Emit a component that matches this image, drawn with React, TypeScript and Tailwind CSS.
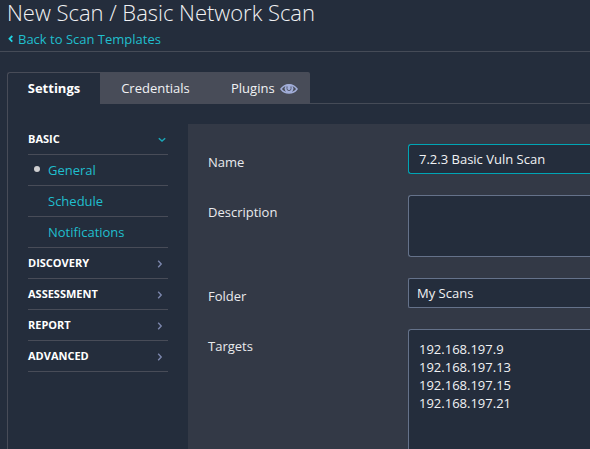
import React from 'react';

const sections = ['DISCOVERY', 'ASSESSMENT', 'REPORT', 'ADVANCED'];
const pages = ['General', 'Schedule', 'Notifications'];
const targets = ['192.168.197.9', '192.168.197.13', '192.168.197.15', '192.168.197.21'];

function Eye() {
  return (
    <svg width="18" height="12" viewBox="0 0 18 12" fill="none" className="ml-[5px] shrink-0">
      <path d="M1 6C4.8.2 13.2.2 17 6 13.2 11.4 4.8 11.4 1 6Z" stroke="#a2aed9" strokeWidth="1.5" />
      <circle cx="9" cy="5.6" r="4.4" fill="#a2aed9" />
      <path d="M7 3.4v2.2a2 2 0 0 0 4 0V3.4" stroke="#555b70" strokeWidth="1" />
    </svg>
  );
}

function Field({ label, gap, pad, children }: { label: string; gap: string; pad: string; children: React.ReactNode }) {
  return (
    <div className={`flex items-start ${gap}`}>
      <div className={`w-[200px] shrink-0 leading-[18px] text-[#e9eaed] ${pad}`}>{label}</div>
      {children}
    </div>
  );
}

export default function App() {
  return (
    <div className="flex h-[449px] w-[590px] flex-col overflow-hidden bg-[#242d3c] font-['Open_Sans',sans-serif] text-[13px] text-[#f1f2f4]">
      <header className="h-[52px] shrink-0 border-b border-[#454b57] pl-[7px]">
        <h1 className="h-[30px] whitespace-nowrap text-[22px] font-light leading-[25px] tracking-[-0.02px]">New Scan / Basic Network Scan</h1>
        <a className="flex items-center leading-[18px] text-[#20bfce]">
          <svg width="6" height="8" viewBox="0 0 6 8" fill="none" className="ml-px mr-1">
            <path d="M4.3 1 1.5 3.8l2.8 2.8" stroke="#22d3e2" strokeWidth="1.8" />
          </svg>
          Back to Scan Templates
        </a>
      </header>

      <main className="ml-[7px] mt-[20px] flex min-h-0 flex-1 flex-col">
        <nav className="flex h-8 shrink-0">
          <div className="flex w-[93px] items-center justify-center rounded-tl-[3px] border-l border-t border-[#484c58] font-bold text-white">Settings</div>
          <div className="flex w-[111px] items-center justify-center bg-[#484c58] pt-px">Credentials</div>
          <div className="flex w-[99px] items-center rounded-tr-[2px] bg-[#484c58] pl-[20px] pt-px">
            Plugins
            <Eye />
          </div>
          <div className="flex-1 border-b border-[#454b57]" />
        </nav>

        <div className="flex min-h-0 flex-1 border-l border-[#484c58]">
          <aside className="ml-[20px] mr-[20px] mt-[20px] w-[140px] shrink-0">
            <div className="flex h-[31px] items-center justify-between border-b border-[#484c58] text-[11px] font-bold text-white">
              <span>BASIC</span>
              <svg width="8" height="6" viewBox="0 0 8 6" fill="none" className="mr-[2px] mt-[2px]">
                <path d="m.8 1.2 3.2 2.9 3.2-2.9" stroke="#1aa6b7" strokeWidth="1.5" />
              </svg>
            </div>
            {pages.map((page, i) => (
              <div key={page} className="flex h-[31px] items-center border-b border-[#484c58] text-[#20bfce]">
                <span className="flex w-5 shrink-0 pl-[6px]">
                  {i === 0 && <span className="mb-[3px] size-[6px] rounded-full bg-[#cfcfd1]" />}
                </span>
                <span className="pt-px">{page}</span>
              </div>
            ))}
            {sections.map((name) => (
              <div key={name} className="flex h-[31px] items-center justify-between border-b border-[#484c58] text-[11px] font-bold text-white">
                <span>{name}</span>
                <svg width="6" height="8" viewBox="0 0 6 8" fill="none" className="mr-[5px] mt-[2px]">
                  <path d="m1.2.8 3 3.2-3 3.2" stroke="#7c87ad" strokeWidth="1.4" />
                </svg>
              </div>
            ))}
          </aside>

          <section className="mt-[20px] min-w-0 flex-1 overflow-hidden bg-[#333946] pl-5 pt-5">
            <Field label="Name" gap="h-[51px]" pad="pt-[9px]">
              <div className="h-[30px] flex-1 rounded-l-[3px] border border-r-0 border-[#00a5b5] bg-[#242d3c] pl-[10px] leading-[29px]">7.2.3 Basic Vuln Scan</div>
            </Field>
            <Field label="Description" gap="h-[83px]" pad="pt-2">
              <div className="h-[62px] flex-1 rounded-l-[3px] border border-r-0 border-[#65728a] bg-[#242d3c]" />
            </Field>
            <Field label="Folder" gap="h-[51px]" pad="pt-[9px]">
              <div className="h-[30px] flex-1 rounded-l-[2px] border border-r-0 border-[#65728a] bg-[#242d3c] pl-[8px] leading-[29px]">My Scans</div>
            </Field>
            <Field label="Targets" gap="h-[140px]" pad="pt-2">
              <div className="h-[140px] flex-1 rounded-l-[3px] border border-r-0 border-[#65728a] bg-[#242d3c] pl-[10px] pt-[10px] leading-[18px]">
                {targets.map((t) => (
                  <div key={t}>{t}</div>
                ))}
              </div>
            </Field>
          </section>
        </div>
      </main>
    </div>
  );
}
